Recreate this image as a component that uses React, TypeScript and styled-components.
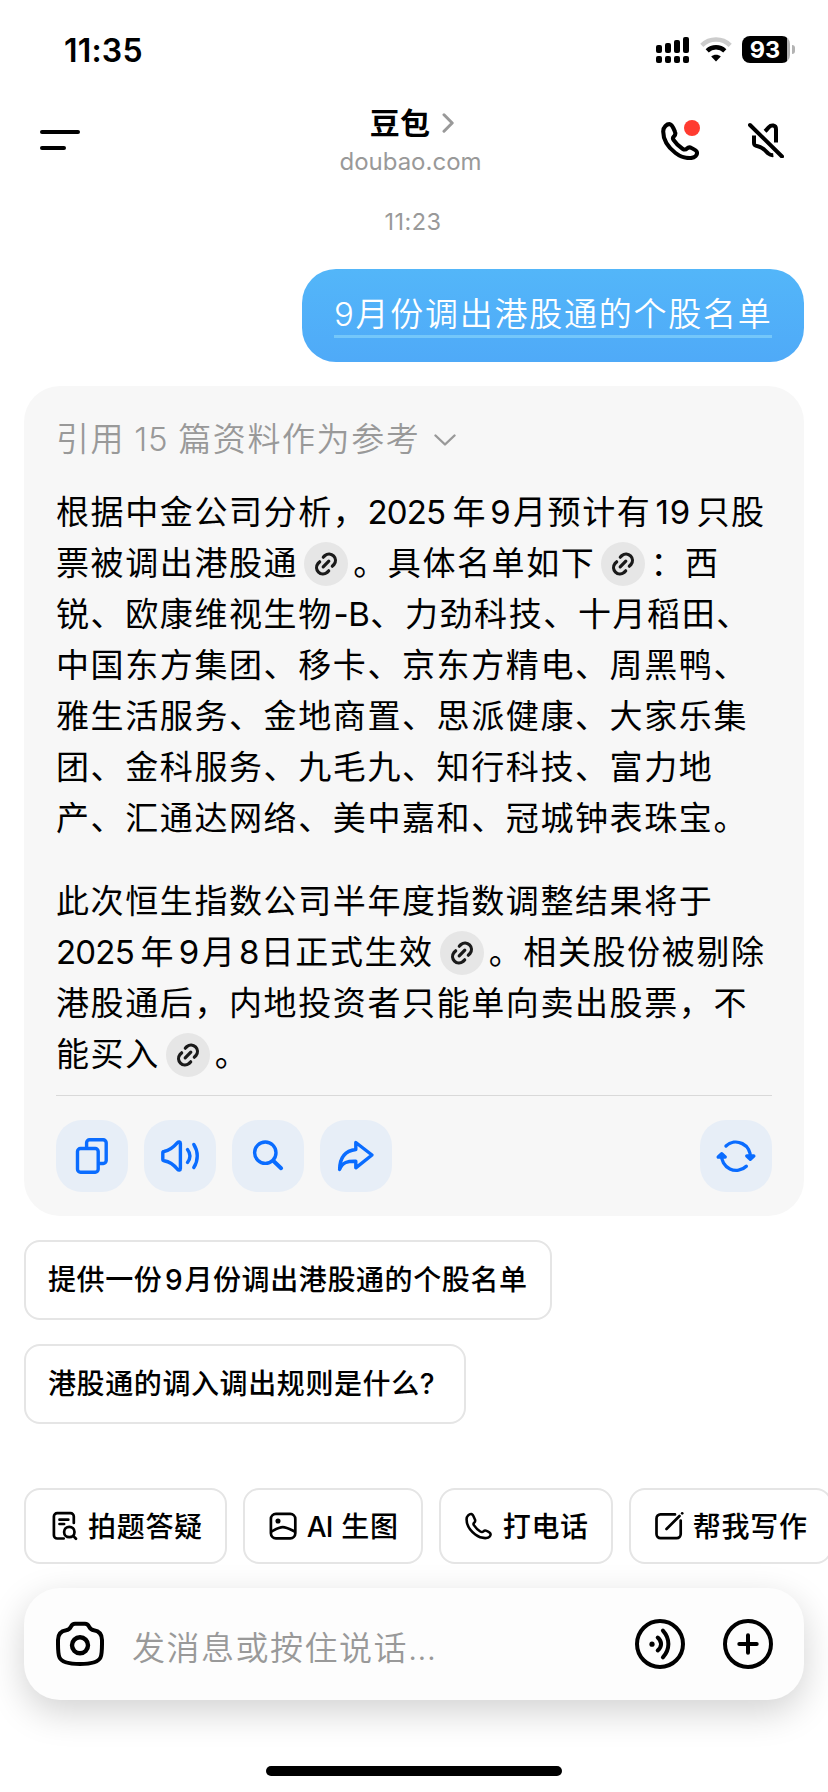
import React from "react";
import styled, { createGlobalStyle } from "styled-components";

const GlobalStyle = createGlobalStyle`
  * { box-sizing: border-box; }
  body {
    margin: 0;
    background: #fff;
    color: #000;
    font-family: Inter, "Noto Sans CJK SC", sans-serif;
  }
  svg { display: block; flex: none; }
  button { font: inherit; color: inherit; border: 0; background: none; padding: 0; margin: 0; }
`;

const Screen = styled.div`
  width: 828px;
  height: 1792px;
  display: flex;
  flex-direction: column;
  overflow: hidden;
  background: #fff;
`;

/* Status bar */
const StatusBar = styled.div`
  height: 88px;
  padding: 36px 33px 0 64px;
  display: flex;
  align-items: flex-start;
  justify-content: space-between;
`;
const Clock = styled.div`
  font-size: 32px;
  line-height: 29px;
  font-weight: 600;
  letter-spacing: 0.2px;
`;
const StatusIcons = styled.div`
  display: flex;
  height: 27px;
  align-items: center;
`;
const Wifi = styled.div`
  margin: 0 10px 0 11px;
`;
const Battery = styled.div`
  width: 48px;
  height: 27px;
  border-radius: 8px;
  background: linear-gradient(90deg, #000 45px, #b3b3b3 45px);
  color: #fff;
  font-size: 23.5px;
  font-weight: 700;
  line-height: 27px;
  text-align: center;
  padding-right: 2px;
`;
const BatteryTip = styled.div`
  width: 3px;
  height: 9px;
  margin-left: 2px;
  border-radius: 0 4px 4px 0;
  background: #b3b3b3;
`;

/* Header */
const Header = styled.header`
  height: 96px;
  display: grid;
  grid-template-columns: 260px 1fr 260px;
  padding: 0 40px;
`;
const MenuButton = styled.button`
  padding-top: 42px;
  display: flex;
  flex-direction: column;
  align-items: flex-start;
  gap: 12px;
`;
const MenuLine = styled.span<{ $w: number }>`
  width: ${(p) => p.$w}px;
  height: 4px;
  border-radius: 2px;
  background: #000;
`;
const TitleBlock = styled.div`
  display: flex;
  flex-direction: column;
  align-items: center;
  padding: 15px 7px 0 0;
`;
const Title = styled.div`
  display: flex;
  align-items: center;
  gap: 12px;
  font-size: 30px;
  line-height: 40px;
  font-weight: 600;
  letter-spacing: 0.3px;
  margin-left: 3px;
`;
const Subtitle = styled.div`
  font-size: 24px;
  line-height: 38px;
  color: #999;
`;
const HeaderActions = styled.div`
  display: flex;
  justify-content: flex-end;
  padding: 34px 4px 0 0;
  gap: 49px;
`;
const CallButton = styled.button`
  position: relative;
  width: 38px;
  height: 38px;
`;
const RedDot = styled.span`
  position: absolute;
  left: 23px;
  top: -2px;
  width: 16px;
  height: 16px;
  border-radius: 50%;
  background: #ff3b30;
`;

/* Conversation */
const Timestamp = styled.div`
  height: 85px;
  line-height: 76px;
  text-align: center;
  font-size: 23.5px;
  letter-spacing: 0.5px;
  color: #999;
  padding-right: 2px;
`;
const Bubble = styled.div`
  align-self: flex-end;
  height: 93px;
  margin-right: 24px;
  padding: 20px 32px 0;
  border-radius: 34px;
  background: linear-gradient(180deg, #53b6f9, #4faaf8);
  color: #fff;
`;
const BubbleText = styled.div`
  height: 49px;
  border-bottom: 3px solid #74c7fa;
  font-size: 33px;
  line-height: 50px;
  letter-spacing: 1.75px;
  font-weight: 350;
  white-space: nowrap;
  width: 438px;
`;
const Card = styled.section`
  margin: 24px 24px 0;
  height: 830px;
  padding: 28px 32px 0;
  border-radius: 36px;
  background: #f7f7f7;
`;
const Sources = styled.div`
  display: flex;
  align-items: center;
  gap: 14px;
  height: 51px;
  font-size: 33px;
  line-height: 53px;
  letter-spacing: 1.6px;
  color: #999;
  font-weight: 350;
  white-space: nowrap;
`;
const Paragraph = styled.div`
  margin-top: 22px;
  font-size: 33px;
  letter-spacing: 1.6px;
  & + & { margin-top: 32px; }
`;
const Line = styled.div`
  display: flex;
  align-items: center;
  height: 51px;
  line-height: 51px;
  white-space: nowrap;
`;
const Num = styled.span<{ $w: number; $ls?: number; $left?: number }>`
  display: inline-block;
  width: ${(p) => p.$w}px;
  padding-left: ${(p) => p.$left ?? 0}px;
  text-align: ${(p) => (p.$left === undefined ? "center" : "left")};
  letter-spacing: ${(p) => p.$ls ?? -0.8}px;
  white-space: nowrap;
`;
const LinkBadge = styled.span`
  flex: none;
  width: 44px;
  height: 44px;
  margin: 0 5px 0 6px;
  border-radius: 50%;
  background: #e6e6e6;
`;
const Divider = styled.div`
  height: 1px;
  margin-top: 15px;
  background: #d9d9d9;
`;
const Actions = styled.div`
  display: flex;
  gap: 16px;
  margin-top: 24px;
`;
const ActionButton = styled.button<{ $end?: boolean }>`
  width: 72px;
  height: 72px;
  border-radius: 26px;
  background: #e7eef7;
  margin-left: ${(p) => (p.$end ? "auto" : "0")};
`;

/* Suggestions */
const Suggestions = styled.div`
  display: flex;
  flex-direction: column;
  align-items: flex-start;
  gap: 24px;
  padding: 24px 24px 0;
`;
const Suggestion = styled.button`
  height: 80px;
  padding: 0 22px;
  border: 2px solid #e5e5e5;
  border-radius: 16px;
  font-size: 28px;
  line-height: 76px;
  letter-spacing: 0.6px;
  font-weight: 500;
  white-space: nowrap;
`;
const Shortcuts = styled.div`
  display: flex;
  gap: 16px;
  margin-top: 64px;
  padding-left: 24px;
`;
const Shortcut = styled.button`
  flex: none;
  display: flex;
  align-items: center;
  gap: 8px;
  height: 76px;
  padding: 0 22px;
  border: 2px solid #e5e5e5;
  border-radius: 16px;
  font-size: 28px;
  letter-spacing: 0.7px;
  font-weight: 500;
  white-space: nowrap;
`;
const ShortcutLabel = styled.span`
  padding-bottom: 2px;
`;

/* Composer */
const Composer = styled.div`
  height: 112px;
  margin: 24px 24px 0;
  padding: 0 31px 0 32px;
  border-radius: 36px;
  background: #fdfdfd;
  box-shadow: 0 12px 36px rgba(0, 0, 0, 0.18);
  display: flex;
  align-items: center;
`;
const Placeholder = styled.div`
  flex: 1;
  padding: 3px 0 0 28px;
  font-size: 33px;
  letter-spacing: 1.5px;
  color: #999;
  font-weight: 350;
`;
const Dots = styled.span`
  letter-spacing: 0;
`;
const RoundActions = styled.div`
  display: flex;
  gap: 38px;
`;
const HomeIndicator = styled.div`
  width: 296px;
  height: 10px;
  margin: 66px auto 0;
  border-radius: 5px;
  background: #000;
`;

function Stroke({
  size,
  w,
  color = "#000",
  children,
}: {
  size: number;
  w: number;
  color?: string;
  children: React.ReactNode;
}) {
  return (
    <svg
      width={size}
      height={size}
      viewBox={`0 0 ${size} ${size}`}
      fill="none"
      stroke={color}
      strokeWidth={w}
      strokeLinecap="round"
      strokeLinejoin="round"
    >
      {children}
    </svg>
  );
}

const PHONE =
  "M9 2.2C6 1.800 2.200 5 2.200 9.500C2.200 18 8 26 14.500 31C20 35.200 26 36.300 30 36C34 35.500 36.300 33 36 30.500C35.800 28.800 34 27.600 30.500 26C28.500 24.900 27.500 25 26 26.500C24.500 28 23.500 28 21.500 26.700C18.500 24.800 14.500 20.800 12.500 17.800C11.500 16.300 11.700 15.500 13 14.300C14.500 12.800 14.800 11.800 14 10C12.600 6.500 11.500 2.700 9 2.200z";

const Cite = () => (
  <LinkBadge>
    <Stroke size={44} w={3.2} color="#1a1a1a">
      <path d="M19.300 15.200L21 13.500a6.400 6.400 0 0 1 9 9l-1.700 1.700" />
      <path d="M24.700 28.800L23 30.500a6.400 6.400 0 0 1-9-9l1.700-1.700" />
      <path d="M19.200 24.800l5.600-5.600" />
    </Stroke>
  </LinkBadge>
);

const Blue = ({ children }: { children: React.ReactNode }) => (
  <Stroke size={72} w={3.4} color="#0a6cff">
    {children}
  </Stroke>
);

export default function App() {
  return (
    <Screen>
      <GlobalStyle />
      <StatusBar>
        <Clock>11:35</Clock>
        <StatusIcons>
          <svg width="33" height="26" viewBox="0 0 33 26" fill="#000">
            <rect x="0" y="8" width="6" height="8" rx="2" />
            <rect x="9" y="6" width="6" height="10" rx="2" />
            <rect x="18" y="3" width="6" height="13" rx="2" />
            <rect x="27" y="0" width="6" height="16" rx="2" />
            <rect x="0" y="19" width="6" height="7" rx="2" />
            <rect x="9" y="19" width="6" height="7" rx="2" />
            <rect x="18" y="19" width="6" height="7" rx="2" />
            <rect x="27" y="19" width="6" height="7" rx="2" />
          </svg>
          <Wifi>
            <svg width="32" height="25" viewBox="0 0 32 25" fill="none">
              <path d="M1.800 8.300a20.300 20.300 0 0 1 28.400 0" stroke="#ccc" strokeWidth="4.500" />
              <path d="M7.200 13.800a12.700 12.700 0 0 1 17.600 0" stroke="#000" strokeWidth="4.500" />
              <path d="M16 24.500l-4.800-5c2.600-2.300 7-2.300 9.600 0z" fill="#000" />
            </svg>
          </Wifi>
          <Battery>93</Battery>
          <BatteryTip />
        </StatusIcons>
      </StatusBar>

      <Header>
        <MenuButton aria-label="菜单">
          <MenuLine $w={40} />
          <MenuLine $w={26} />
        </MenuButton>
        <TitleBlock>
          <Title>
            豆包
            <svg width="12" height="20" viewBox="0 0 12 20" fill="none" stroke="#999" strokeWidth="3" strokeLinecap="round" strokeLinejoin="round">
              <path d="M2 1.800l8.200 8.200L2 18.200" />
            </svg>
          </Title>
          <Subtitle>doubao.com</Subtitle>
        </TitleBlock>
        <HeaderActions>
          <CallButton aria-label="通话">
            <Stroke size={38} w={4.1}>
              <path d={PHONE} />
            </Stroke>
            <RedDot />
          </CallButton>
          <Stroke size={36} w={4}>
            <path d="M2 3l32 31.500" />
            <path d="M17 9.300c1.500-1.400 2.500-2.700 3.700-4C23.200 2.600 28 2.800 28 7.200V20.500" strokeLinecap="butt" />
            <path d="M6 13.500V21c0 2.200.8 2.800 3.800 3.300 5.500 1 7.500 4.500 10.500 7.200 1.600 1.300 3.200 1.800 5 1.600" strokeLinecap="butt" />
          </Stroke>
        </HeaderActions>
      </Header>

      <Timestamp>11:23</Timestamp>

      <Bubble>
        <BubbleText>
          <Num $w={21.5} $left={0}>9</Num>月份调出港股通的个股名单
        </BubbleText>
      </Bubble>

      <Card>
        <Sources>
          <span>
            引用<Num $w={53} $ls={0.8} $left={9}>15</Num>篇资料作为参考
          </span>
          <svg width="22" height="12" viewBox="0 0 22 12" fill="none" stroke="#999" strokeWidth="2.400" strokeLinecap="round" strokeLinejoin="round">
            <path d="M1.500 1.500l9.500 9 9.500-9" />
          </svg>
        </Sources>

        <Paragraph>
          <Line>
            根据中金公司分析，<Num $w={85} $left={0}>2025</Num>年<Num $w={26}>9</Num>月预计有
            <Num $w={45} $ls={1} $left={4}>19</Num>只股
          </Line>
          <Line>
            票被调出港股通
            <Cite />
            。具体名单如下
            <Cite />
            ：西
          </Line>
          <Line>
            锐、欧康维视生物<Num $w={37.5} $ls={-0.3}>-B</Num>、力劲科技、十月稻田、
          </Line>
          <Line>中国东方集团、移卡、京东方精电、周黑鸭、</Line>
          <Line>雅生活服务、金地商置、思派健康、大家乐集</Line>
          <Line>团、金科服务、九毛九、知行科技、富力地</Line>
          <Line>产、汇通达网络、美中嘉和、冠城钟表珠宝。</Line>
        </Paragraph>
        <Paragraph>
          <Line>此次恒生指数公司半年度指数调整结果将于</Line>
          <Line>
            <Num $w={84.5} $left={0}>2025</Num>年<Num $w={27}>9</Num>月<Num $w={24}>8</Num>日正式生效
            <Cite />
            。相关股份被剔除
          </Line>
          <Line>港股通后，内地投资者只能单向卖出股票，不</Line>
          <Line>
            能买入
            <Cite />。
          </Line>
        </Paragraph>

        <Divider />
        <Actions>
          <ActionButton aria-label="复制">
            <Blue>
              <rect x="21.500" y="28.500" width="20.700" height="23.700" rx="3" />
              <path d="M30.600 28v-5.200a3 3 0 0 1 3-3h13.600a3 3 0 0 1 3 3v17.700a3 3 0 0 1-3 3h-4" />
            </Blue>
          </ActionButton>
          <ActionButton aria-label="朗读">
            <Blue>
              <path d="M20 31.500c5-1 9-3.500 13.500-8.800 1.200-1.300 2.900-1.100 2.900.7v25.200c0 1.800-1.700 2-2.900.7C29 43.500 25 41.500 20 40.700c-.8-.1-1.200-.6-1.200-1.400v-6.400c0-.8.4-1.300 1.200-1.400z" />
              <path d="M43.500 29.500c3 4 3 9 0 13" />
              <path d="M49.800 24.500c4.600 7 4.600 16 0 23" />
            </Blue>
          </ActionButton>
          <ActionButton aria-label="搜索">
            <Blue>
              <circle cx="33.300" cy="32.700" r="10.700" />
              <path d="M41.500 41l7.600 7.200" strokeWidth="4" />
            </Blue>
          </ActionButton>
          <ActionButton aria-label="分享">
            <Blue>
              <path d="M35.800 22.500L52 35 35.800 47.800V41.200C27.500 41 22.500 42 19.600 49.500C19.800 38 24.500 30.800 35.800 29.500z" />
            </Blue>
          </ActionButton>
          <ActionButton $end aria-label="重新生成">
            <Blue>
              <path d="M26 26a14.500 14.500 0 0 1 24.300 12" />
              <path d="M46.800 36h7l-3.500 3.200z" fill="#0a6cff" />
              <path d="M46.300 46.200A14.500 14.500 0 0 1 21.700 34.500" />
              <path d="M18.200 37h7l-3.500-3.200z" fill="#0a6cff" />
            </Blue>
          </ActionButton>
        </Actions>
      </Card>

      <Suggestions>
        <Suggestion>
          提供一份<Num $w={22}>9</Num>月份调出港股通的个股名单
        </Suggestion>
        <Suggestion>
          港股通的调入调出规则是什么<Num $w={22} $left={0}>?</Num>
        </Suggestion>
      </Suggestions>

      <Shortcuts>
        <Shortcut>
          <Stroke size={32} w={2.7}>
            <path d="M25.800 13V6.500a3.300 3.300 0 0 0-3.300-3.300H9.200a3.300 3.300 0 0 0-3.300 3.300v18.700a3.300 3.300 0 0 0 3.300 3.300h6.500" />
            <path d="M11.500 9.700h8.800M11.500 14h4.600" />
            <circle cx="21.300" cy="22" r="5.200" />
            <path d="M25.200 25.900l2.800 2.900" />
          </Stroke>
          <ShortcutLabel>拍题答疑</ShortcutLabel>
        </Shortcut>
        <Shortcut>
          <Stroke size={32} w={2.7}>
            <rect x="3.900" y="3.900" width="24.400" height="24.400" rx="5" />
            <circle cx="11" cy="11" r="1.200" />
            <path d="M4.500 21.500c3.500-1.800 7.500-4.300 11.300-4.300s8 2.500 11.700 4.300" />
          </Stroke>
          <ShortcutLabel>
            <Num $w={34.5} $ls={-0.8} $left={0}>AI</Num>生图
          </ShortcutLabel>
        </Shortcut>
        <Shortcut>
          <Stroke size={32} w={2.7}>
            <g transform="translate(2 2.500) scale(0.710)" strokeWidth="3.600">
              <path d={PHONE} />
            </g>
          </Stroke>
          <ShortcutLabel>打电话</ShortcutLabel>
        </Shortcut>
        <Shortcut>
          <Stroke size={32} w={2.7}>
            <path d="M22 4.400H7.500a4 4 0 0 0-4 4v15.700a4 4 0 0 0 4 4h16.200a4 4 0 0 0 4-4V10.500" />
            <path d="M13.500 19L26.500 6" />
            <path d="M29.200 3.300h.01" />
          </Stroke>
          <ShortcutLabel>帮我写作</ShortcutLabel>
        </Shortcut>
      </Shortcuts>

      <Composer>
        <Stroke size={48} w={4}>
          <path d="M19 3.800h10c2 0 3.200 1 4.200 3 1 2 2.200 3 4.600 3.400C43 11 46 14 46 20c0 9 .2 14-1.500 17.500C42.500 42 36 44 24 44S5.500 42 3.500 37.500C1.800 34 2 29 2 20c0-6 3-9 8.200-9.800 2.400-.4 3.600-1.400 4.600-3.400 1-2 2.200-3 4.200-3z" />
          <circle cx="24" cy="25.300" r="8" strokeWidth="4.400" />
        </Stroke>
        <Placeholder>
          发消息或按住说话<Dots>...</Dots>
        </Placeholder>
        <RoundActions>
          <Stroke size={50} w={4}>
            <circle cx="25" cy="25" r="23" />
            <circle cx="17" cy="25.200" r="2.600" fill="#000" stroke="none" />
            <path d="M22.700 18.500c4.500 4 4.500 9 0 13" />
            <path d="M27.900 11.600c7.300 8 7.300 19 0 26.800" />
          </Stroke>
          <Stroke size={50} w={4}>
            <circle cx="25" cy="25" r="23" />
            <path d="M16.300 25h17.400M25 16.300v17.400" />
          </Stroke>
        </RoundActions>
      </Composer>
      <HomeIndicator />
    </Screen>
  );
}
